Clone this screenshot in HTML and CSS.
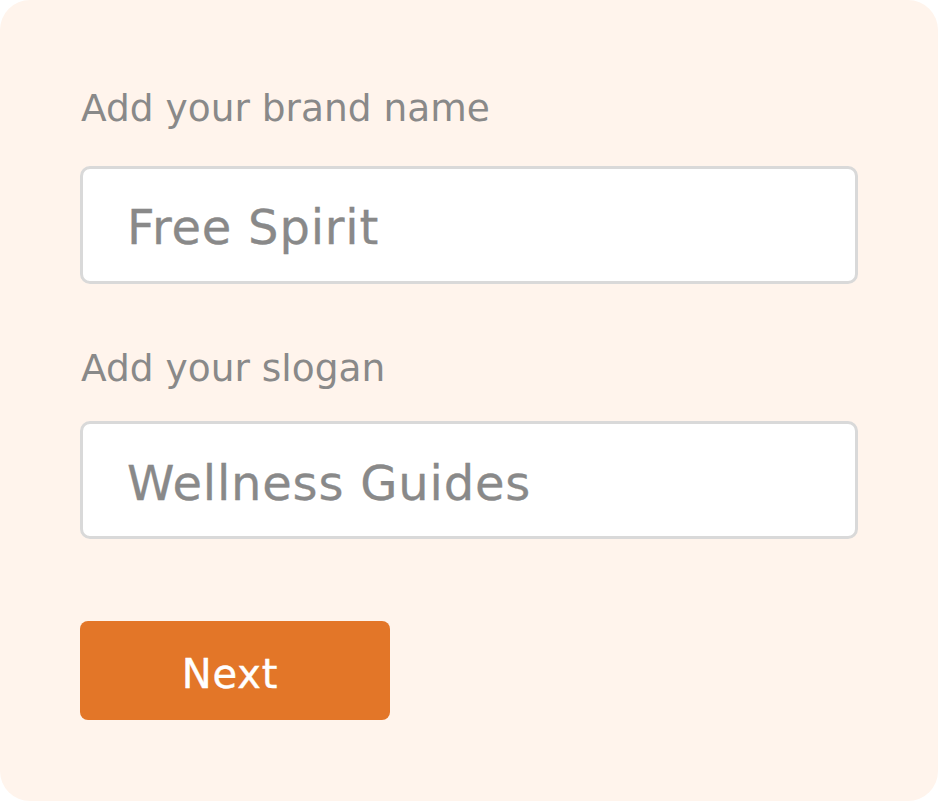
FILE: index.html
```html
<!DOCTYPE html>
<html lang="en">
<head>
<meta charset="utf-8">
<title>Brand setup</title>
<link rel="stylesheet" href="styles.css">
</head>
<body>
<div class="card">
  <div class="field">
    <label class="label">Add your brand name</label>
    <div class="input input-first">Free Spirit</div>
  </div>
  <div class="field field-second">
    <label class="label">Add your slogan</label>
    <div class="input input-second">Wellness Guides</div>
  </div>
  <button class="next" type="button">Next</button>
</div>
</body>
</html>
```
FILE: styles.css
```css
html, body {
  margin: 0;
  padding: 0;
  background: #ffffff;
}
body {
  font-family: "DejaVu Sans", sans-serif;
}
.card {
  box-sizing: border-box;
  width: 938px;
  height: 801px;
  background: #fff4ec;
  border-radius: 30px;
  padding: 90px 80px 0 80px;
  display: flex;
  flex-direction: column;
  align-items: flex-start;
}
.field {
  display: flex;
  flex-direction: column;
  align-self: stretch;
}
.field-second {
  margin-top: 66px;
}
.label {
  font-size: 37.5px;
  line-height: 37.5px;
  color: #898989;
  padding-left: 1px;
}
.input {
  box-sizing: border-box;
  height: 118px;
  width: 778px;
  background: #ffffff;
  border: 3px solid #d9d9d9;
  border-radius: 10px;
  display: flex;
  align-items: center;
  padding: 5px 0 0 44px;
  font-size: 48px;
  line-height: 48px;
  letter-spacing: 0.8px;
  color: #898989;
  -webkit-text-stroke: 0.3px #898989;
}
.input-first {
  margin-top: 38px;
}
.input-second {
  margin-top: 34px;
}
.next {
  margin-top: 82px;
  width: 310px;
  height: 99px;
  border: none;
  border-radius: 8px;
  background: #e37628;
  color: #ffffff;
  font-family: "DejaVu Sans", sans-serif;
  font-size: 40px;
  line-height: 40px;
  letter-spacing: 0.8px;
  -webkit-text-stroke: 0.4px #ffffff;
  display: flex;
  align-items: center;
  justify-content: center;
  padding: 7px 10px 0 0;
}
```
